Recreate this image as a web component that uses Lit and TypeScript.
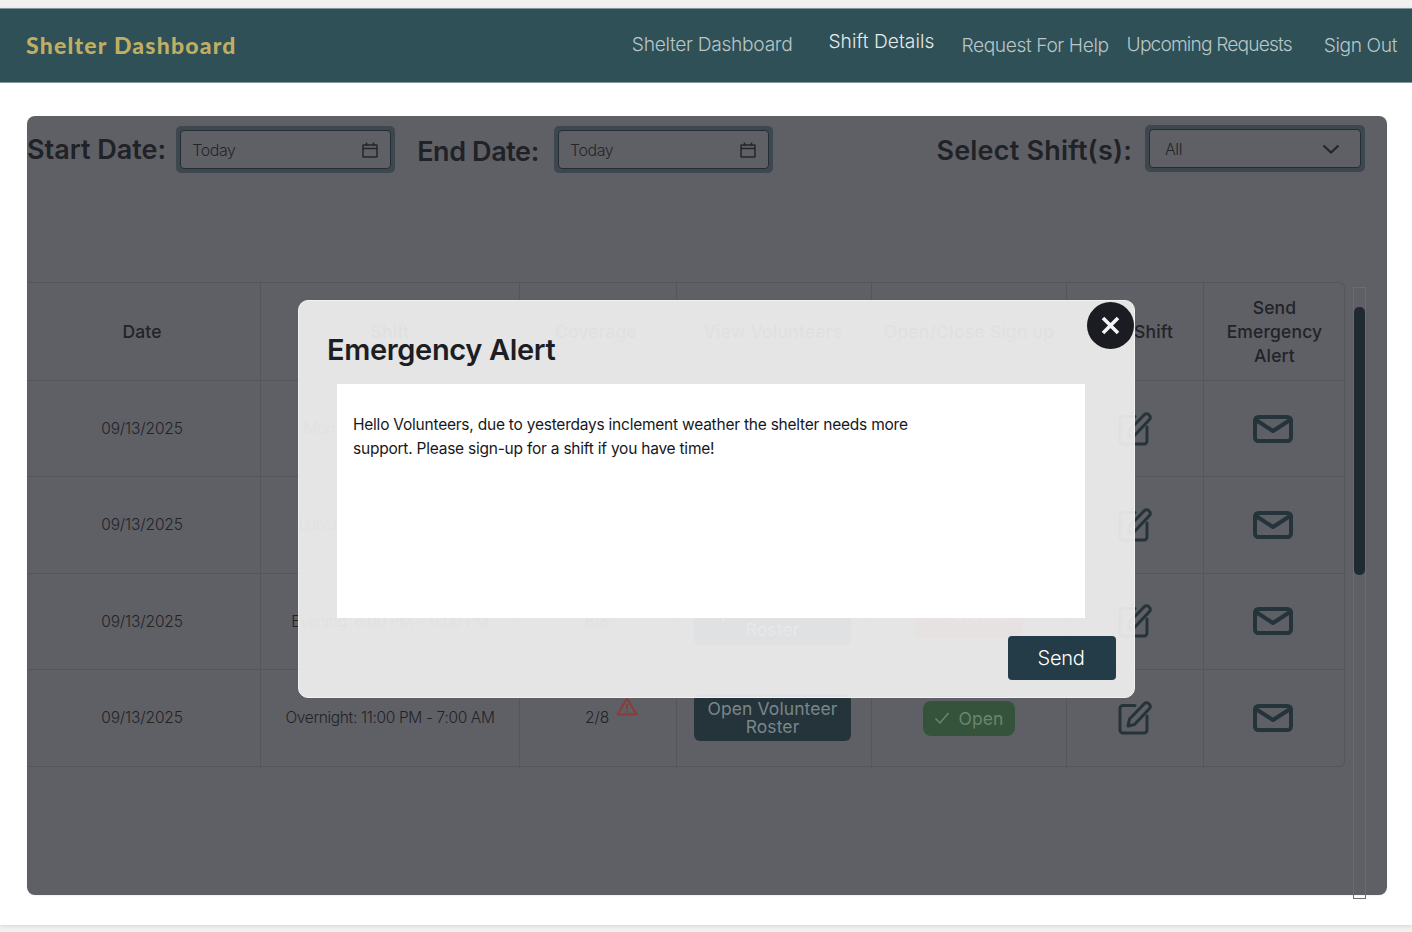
import { LitElement, html, css, svg } from 'lit';
import { customElement } from 'lit/decorators.js';

const calendarIcon = html`<svg class="cal" viewBox="0 0 16 16" fill="none" stroke="currentColor" stroke-width="1.5">
  <rect x="1" y="3" width="14" height="12" rx="0.5"></rect><path d="M1 6.5h14M4.5 0.5v3M11.5 0.5v3"></path></svg>`;

const editIcon = html`<svg class="edit" viewBox="0 0 34 34" fill="none" stroke="#24343a" stroke-width="3" stroke-linecap="round" stroke-linejoin="round">
  ${svg`<path d="M17 4.5H5a3 3 0 0 0-3 3V29a3 3 0 0 0 3 3h21a3 3 0 0 0 3-3V15"></path>
  <path d="M10 25l1.5-7L26.5 2.500a2.800 2.800 0 0 1 4 0l1 1a2.800 2.800 0 0 1 0 4L16.500 23.500z"></path>`}
</svg>`;

const mailIcon = html`<svg class="mail" viewBox="0 0 40 28" fill="none" stroke="#24343a" stroke-width="4" stroke-linejoin="round">
  <rect x="2" y="2" width="36" height="24" rx="3.500"></rect><path d="M3 5l17 11L37 5"></path></svg>`;

const warnIcon = html`<svg class="warn" viewBox="0 0 22 19" fill="none" stroke="#8a3b3a" stroke-width="2" stroke-linejoin="round">
  <path d="M11 1.500L1.500 17.500h19z"></path><path d="M11 7v5.500M11 14v1.500"></path></svg>`;

type Row = { shift: string; coverage: string; open: boolean; low: boolean };

const rows: Row[] = [
  { shift: 'Morning: 7:00 - 11:00 AM', coverage: '6/8', open: true, low: false },
  { shift: 'Lunch: 11:00 AM - 1:00 PM', coverage: '7/8', open: true, low: false },
  { shift: 'Evening: 6:00 PM - 11:00 PM', coverage: '8/8', open: false, low: false },
  { shift: 'Overnight: 11:00 PM - 7:00 AM', coverage: '2/8', open: true, low: true },
];

@customElement('app-root')
export class AppRoot extends LitElement {
  static styles = css`
    :host {
      display: block;
      height: 932px;
      box-sizing: border-box;
      padding-top: 8px;
      background: #f1f1f1;
      font-family: Inter, "Liberation Sans", sans-serif;
      overflow: hidden;
    }
    .page {
      height: 917px;
      background: #fff;
      box-shadow: 0 1px 4px rgba(0,0,0,.12);
      overflow: hidden;
    }
    header {
      height: 75px;
      background: #2f5056;
      border-top: 1px solid #7f979a;
      border-bottom: 1px solid #7f979a;
      box-sizing: border-box;
      display: flex;
      align-items: center;
      padding: 0 15px 2px 26px;
    }
    .logo {
      font-family: Lato, Inter, sans-serif;
      font-weight: 900;
      font-size: 23px;
      letter-spacing: 1.200px;
      color: #bfae64;
      flex: 1;
    }
    nav { display: flex; align-items: center; }
    nav a {
      font-size: 19.200px;
      font-weight: 300;
      letter-spacing: -.3px;
      color: #b8c6c8;
      padding-bottom: 2px;
      white-space: nowrap;
    }
    nav a.active { color: #e4eaea; padding-bottom: 8px; letter-spacing: .05px; }
    nav a.req { padding-bottom: 0; letter-spacing: -.4px; }
    nav a.up { letter-spacing: -.85px; }
    .card {
      position: relative;
      margin: 33px 0 0 27px;
      width: 1360px;
      height: 779px;
      background: #5f6065;
      border-radius: 8px;
      box-shadow: 0 1px 2px rgba(0,0,0,.06);
    }
    .filters { display: flex; height: 166px; box-sizing: border-box; padding-top: 10px; align-items: flex-start; }
    .label {
      font-size: 27px;
      font-weight: 600;
      letter-spacing: 0;
      color: #202227;
      line-height: 47px;
      white-space: nowrap;
    }
    .label.end { margin: 2px 0 0 22px; letter-spacing: -.4px; }
    .label.sel { margin: 1px 0 0 auto; letter-spacing: .2px; }
    .field {
      box-sizing: border-box;
      height: 47px;
      width: 219px;
      border: 4px solid #3c484e;
      border-radius: 5px;
      margin-left: 10px;
      background: #3c484e;
    }
    .field.f2 { margin-left: 15px; }
    .field.f3 { margin: -1px 22px 0 13px; width: 220px; }
    .field.f3 .field-inner { padding-left: 15px; }
    .field-inner {
      box-sizing: border-box;
      height: 39px;
      border: 1px solid #242d33;
      border-radius: 4px;
      background: #5f6065;
      display: flex;
      align-items: center;
      justify-content: space-between;
      padding: 0 12px 0 11px;
      font-size: 16px;
      font-weight: 300;
      letter-spacing: -.4px;
      color: #23262b;
    }
    .cal { width: 16px; height: 16px; color: #23262b; }
    .chev { width: 18px; height: 10px; margin-right: 8px; }
    .body { display: flex; }
    .grid {
      width: 1318px;
      height: 485px;
      box-sizing: border-box;
      display: grid;
      grid-template-columns: 234px 259px 157px 195px 195px 137px 141px;
      grid-template-rows: 98px 96px 96.500px 96.500px 98px;
      border: 1px solid #54565b;
      border-left: none;
      border-radius: 0 6px 6px 0;
    }
    .cell {
      display: flex;
      align-items: center;
      justify-content: center;
      text-align: center;
      border-right: 1px solid #54565b;
      border-bottom: 1px solid #54565b;
      box-sizing: border-box;
      font-size: 15.500px;
      font-weight: 300;
      letter-spacing: -.15px;
      color: #212328;
      min-width: 0;
      white-space: nowrap;
      position: relative;
    }
    .cell.first { padding-right: 3px; }
    .cell.wide { letter-spacing: -.35px; }
    .cell.cov-cell { padding-right: 2px; }
    .cell.last { border-right: none; }
    .cell.row-last { border-bottom: none; padding-bottom: 3px; }
    .th { font-size: 17.500px; font-weight: 500; letter-spacing: .15px; line-height: 24px; white-space: normal; padding: 0 22px; }
    .cell.th.first { padding: 0 3px 0 0; }
    .cell.th.cov-cell { padding: 0 4px 0 0; }
    .th.one { white-space: nowrap; padding: 0; letter-spacing: .2px; }
    .th.view { padding-right: 2px; }
    .roster {
      width: 157px;
      height: 47px;
      box-sizing: border-box;
      margin-right: 3px;
      background: #24343a;
      border-radius: 6px;
      color: #7a868a;
      font-size: 17.500px;
      line-height: 18px;
      letter-spacing: .1px;
      font-weight: 400;
      display: flex;
      align-items: center;
      justify-content: center;
      white-space: normal;
      padding: 0 8px;
    }
    .status {
      height: 35px;
      border-radius: 8px;
      display: flex;
      align-items: center;
      gap: 8px;
      padding: 0 11px;
      margin-top: 1px;
      font-size: 17.500px;
      font-weight: 400;
      letter-spacing: .1px;
    }
    .status svg { width: 16px; height: 14px; }
    .status.open { background: #35533a; color: #6a8570; }
    .status.closed { background: #7c3b38; color: #a37472; padding: 0 13px; height: 48px; margin: 0 0 14px; }
    .cov { position: relative; }
    .warn { position: absolute; left: 31px; top: -11px; width: 22px; height: 19px; }
    .edit { width: 34px; height: 34px; margin-left: -1px; }
    .mail { width: 40px; height: 28px; margin-left: -4px; }
    .track {
      box-sizing: border-box;
      width: 13px;
      height: 612px;
      margin: 5px 0 0 8px;
      border: 1px solid #6b6c71;
      padding-top: 19px;
    }
    .thumb { height: 268px; border-radius: 5px; background: #1f2a31; }
    .modal {
      position: absolute;
      left: 271px;
      top: 184px;
      width: 837px;
      height: 398px;
      box-sizing: border-box;
      background: rgba(239,239,239,.93);
      border: 1px solid #f2f2f2;
      border-radius: 10px;
      padding: 29px 18px 17px 28px;
      display: flex;
      flex-direction: column;
    }
    .modal h2 {
      margin: 0;
      font-size: 29px;
      line-height: 40px;
      font-weight: 600;
      letter-spacing: -.35px;
      color: #1c1e24;
    }
    .note {
      box-sizing: border-box;
      width: 748px;
      height: 234px;
      margin: 14px 0 0 10px;
      background: #fff;
      padding: 29px 16px;
      font-size: 15.500px;
      line-height: 24px;
      font-weight: 400;
      letter-spacing: -.23px;
      color: #17181c;
    }
    .note p { margin: 0; max-width: 570px; }
    .foot { display: flex; justify-content: flex-end; margin-top: 18px; }
    .send {
      width: 108px;
      height: 44px;
      border: none;
      border-radius: 4px;
      background: #243c48;
      color: #fff;
      font-family: inherit;
      font-size: 20px;
      font-weight: 300;
      letter-spacing: -.3px;
      padding: 0 2px 0 0;
    }
    .close {
      position: absolute;
      right: 0;
      top: 1px;
      width: 47px;
      height: 47px;
      border-radius: 50%;
      background: #1b1c21;
      display: flex;
      align-items: center;
      justify-content: center;
    }
    .close svg { width: 21px; height: 21px; }
  `;

  renderRow(r: Row, i: number) {
    const lastRow = i === rows.length - 1 ? 'row-last' : '';
    return html`
      <div class="cell first ${lastRow}">09/13/2025</div>
      <div class="cell wide ${lastRow}">${r.shift}</div>
      <div class="cell cov-cell ${lastRow}"><span class="cov">${r.coverage}${r.low ? warnIcon : ''}</span></div>
      <div class="cell ${lastRow}"><div class="roster">Open Volunteer Roster</div></div>
      <div class="cell ${lastRow}">
        ${r.open
          ? html`<div class="status open"><svg viewBox="0 0 16 14" fill="none" stroke="currentColor" stroke-width="1.500"><path d="M1.500 7.500l4.500 4.500L14.500 2"></path></svg>Open</div>`
          : html`<div class="status closed"><svg viewBox="0 0 16 14" fill="none" stroke="currentColor" stroke-width="1.500"><path d="M2 1l12 12M14 1L2 13"></path></svg>Closed</div>`}
      </div>
      <div class="cell ${lastRow}">${editIcon}</div>
      <div class="cell last ${lastRow}">${mailIcon}</div>
    `;
  }

  render() {
    return html`
      <div class="page">
        <header>
          <div class="logo">Shelter Dashboard</div>
          <nav>
            <a style="margin-right:36px">Shelter Dashboard</a>
            <a class="active" style="margin-right:27px">Shift Details</a>
            <a class="req" style="margin-right:18px">Request For Help</a>
            <a class="up" style="margin-right:32px">Upcoming Requests</a>
            <a class="req">Sign Out</a>
          </nav>
        </header>
        <div class="card">
          <div class="filters">
            <div class="label">Start Date:</div>
            <div class="field"><div class="field-inner">Today ${calendarIcon}</div></div>
            <div class="label end">End Date:</div>
            <div class="field f2"><div class="field-inner">Today ${calendarIcon}</div></div>
            <div class="label sel">Select Shift(s):</div>
            <div class="field f3">
              <div class="field-inner">All
                <svg class="chev" viewBox="0 0 18 10" fill="none" stroke="#23262b" stroke-width="2.200"><path d="M1.500 1.500L9 8.500l7.500-7"></path></svg>
              </div>
            </div>
          </div>
          <div class="body">
            <div class="grid">
              <div class="cell th first">Date</div>
              <div class="cell th">Shift</div>
              <div class="cell th cov-cell">Coverage</div>
              <div class="cell th one view">View Volunteers</div>
              <div class="cell th one">Open/Close Sign up</div>
              <div class="cell th">Edit Shift</div>
              <div class="cell th last">Send Emergency Alert</div>
              ${rows.map((r, i) => this.renderRow(r, i))}
            </div>
            <div class="track"><div class="thumb"></div></div>
          </div>
          <div class="modal">
            <h2>Emergency Alert</h2>
            <div class="note">
              <p>Hello Volunteers, due to yesterdays inclement weather the shelter needs more support. Please sign-up for a shift if you have time!</p>
            </div>
            <div class="foot"><button class="send">Send</button></div>
            <div class="close">
              <svg viewBox="0 0 21 21" fill="none" stroke="#f4f4f4" stroke-width="3.600"><path d="M3 3l15 15M18 3L3 18"></path></svg>
            </div>
          </div>
        </div>
      </div>
    `;
  }
}
